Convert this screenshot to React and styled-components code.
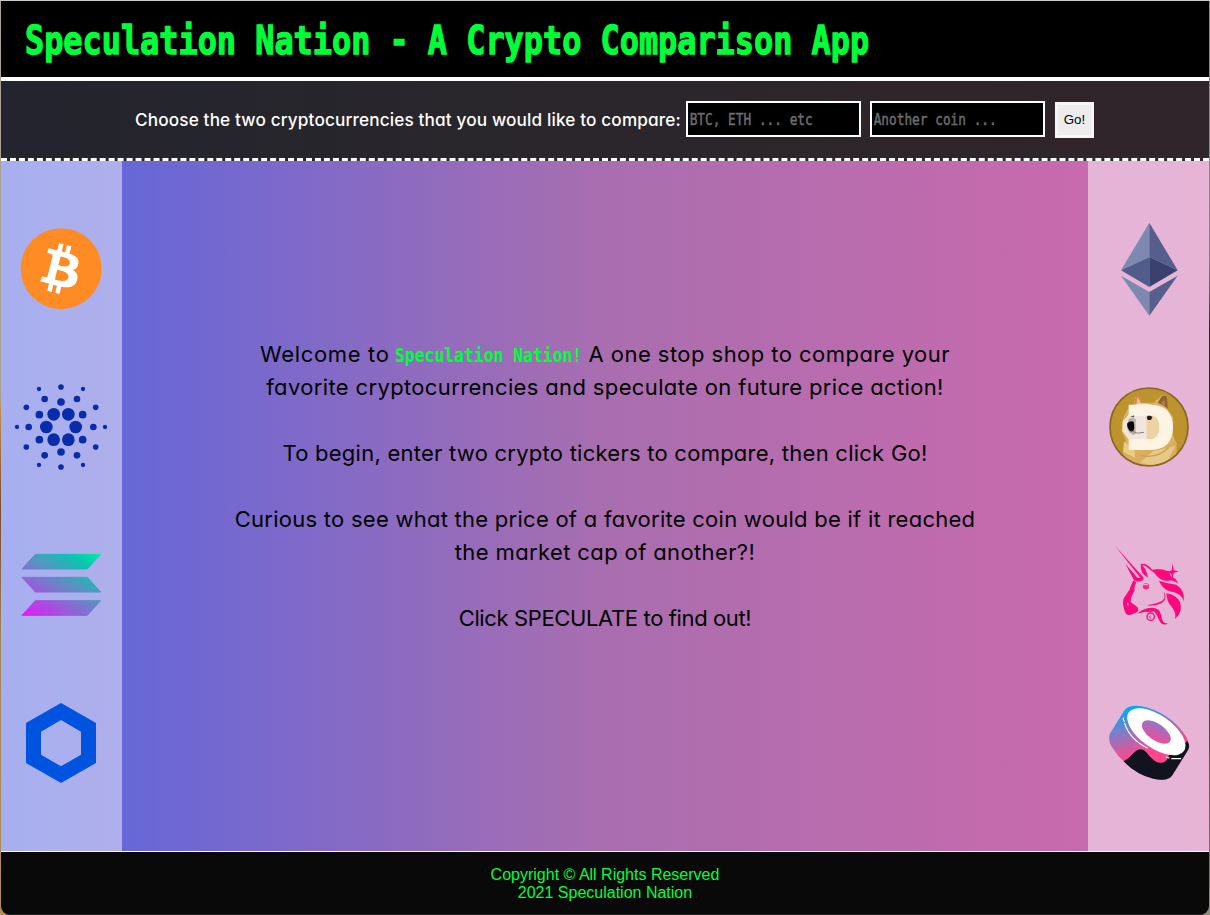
import React from "react";
import styled, { createGlobalStyle } from "styled-components";

const GlobalStyle = createGlobalStyle`
  * { box-sizing: border-box; }
  body { margin: 0; overflow: hidden; }
`;

const neon = "#00ff38";
const terminal = `"DejaVu Sans Mono", "Liberation Mono", monospace`;
const rounded = `Inter, "Open Sans", sans-serif`;

const Desktop = styled.div`
  height: 915px;
  padding: 1px 1px 0;
  background:
    linear-gradient(#c9cac8, #c9cac8) top / 100% 1px no-repeat,
    linear-gradient(#a9a294 0 43%, #c08a48 45%, #7b4a2c 56%, #a0865c 70%, #b58d55) left / 20px 100% no-repeat,
    linear-gradient(#8a8a8c 0 20%, #6f8583 29%, #2b2b2a 36% 70%, #8b8a80) right / 20px 100% no-repeat,
    #777;
`;

const Window = styled.div`
  display: flex;
  flex-direction: column;
  height: 914px;
  overflow: hidden;
  border-radius: 0 0 9px 9px;
  background: linear-gradient(to right, #5666e2 0%, #6667d8 10%, #a96eaf 50%, #c96aad 90%, #cf69ad 100%);
`;

const Header = styled.header`
  flex: 0 0 80px;
  display: flex;
  align-items: center;
  padding: 4px 0 0 24px;
  background: #000;
  border-bottom: 4px solid #fff;
`;

const Title = styled.h1`
  margin: 0;
  white-space: nowrap;
  color: ${neon};
  font: bold 38.4px/46px ${terminal};
  -webkit-text-stroke: 1.3px ${neon};
  transform: scaleX(0.83);
  transform-origin: left center;
`;

const SearchBar = styled.form`
  flex: 0 0 80px;
  display: flex;
  align-items: center;
  padding-left: 134px;
  background: linear-gradient(to right, #23242e, #2a262b 45%, #30252a);
  border-bottom: 3px dashed #fff;
`;

const Prompt = styled.label`
  width: 551px;
  white-space: nowrap;
  color: #fff;
  font: 500 17.2px/24px ${rounded};
  font-feature-settings: "cv11";
  letter-spacing: 0.14px;
`;

const Field = styled.div`
  width: 175px;
  height: 36px;
  margin-right: ${(p) => p.$gap}px;
  margin-bottom: 2px;
  overflow: hidden;
  background: #000;
  border: 2px solid #fff;
`;

const TickerInput = styled.input`
  display: block;
  width: 125%;
  height: 32px;
  padding: 3px 2px 0;
  border: 0;
  outline: 0;
  background: transparent;
  color: ${neon};
  font: 15.4px ${terminal};
  transform: scaleX(0.83);
  transform-origin: left center;
  &::placeholder {
    color: #6c6c6c;
    opacity: 1;
    -webkit-text-stroke: 0.5px #6c6c6c;
  }
`;

const GoButton = styled.button`
  width: 39px;
  height: 36px;
  padding: 0;
  border: 3px solid #f5f5f5;
  background: #ececec;
  color: #000;
  font: 13.3px "Liberation Sans", Arial, sans-serif;
`;

const Main = styled.main`
  flex: 0 0 691px;
  display: flex;
  border-bottom: 1px solid #fff;
`;

const CoinColumn = styled.aside`
  flex: 0 0 121px;
  display: flex;
  flex-direction: column;
  padding: 29px 0;
  background: rgba(255, 255, 255, ${(p) => p.$veil || 0.48});
`;

const CoinSvg = styled.svg`
  display: block;
  width: 121px;
  height: 158px;
`;

const Welcome = styled.section`
  flex: 1;
  display: flex;
  flex-direction: column;
  align-items: center;
  padding-top: 177px;
  color: #000;
  font: 22px/33px ${rounded};
  font-feature-settings: "cv11";
`;

const Paragraph = styled.div`
  display: flex;
  flex-direction: column;
  align-items: center;
  margin-bottom: 33px;
`;

const Line = styled.div`
  display: flex;
  white-space: pre;
  letter-spacing: ${(p) => p.$tracking || 0}px;
`;

const Phrase = styled.span`
  letter-spacing: ${(p) => p.$tracking}px;
`;

const Brand = styled.strong`
  width: 188px;
  margin: 0 6px 0 5px;
  color: ${neon};
  font: bold 19.2px/33px ${terminal};
  letter-spacing: 0;
  transform: translateY(1px) scaleX(0.853);
  transform-origin: left center;
`;

const Footer = styled.footer`
  flex: 1;
  padding-top: 14px;
  text-align: center;
  background: #090909;
  border-bottom: 1px solid #242424;
  color: ${neon};
  font: 16px/18px "Liberation Sans", Arial, sans-serif;
`;

const Bitcoin = () => (
  <CoinSvg viewBox="3 -60 363 474">
    <circle cx="183.5" cy="176" r="121.5" fill="#ff8b24" />
    <path
      transform="translate(58.5 54) scale(7.62)"
      fill="#fff"
      d="M23.189 14.02c.314-2.096-1.283-3.223-3.465-3.975l.708-2.84-1.728-.43-.69 2.765c-.454-.114-.92-.22-1.385-.326l.695-2.783L15.596 6l-.708 2.839c-.376-.086-.746-.17-1.104-.26l.002-.009-2.384-.595-.46 1.846s1.283.294 1.256.312c.7.175.826.638.805 1.006l-.806 3.235c.048.012.11.03.18.057l-.183-.045-1.13 4.532c-.086.212-.303.531-.793.41.018.025-1.256-.313-1.256-.313l-.858 1.978 2.25.561c.418.105.828.215 1.231.318l-.715 2.872 1.727.43.708-2.84c.472.127.93.245 1.378.357l-.706 2.828 1.728.43.715-2.866c2.948.558 5.164.333 6.097-2.333.752-2.146-.037-3.385-1.588-4.192 1.13-.26 1.98-1.003 2.207-2.538zm-3.95 5.538c-.533 2.147-4.148.986-5.32.695l.95-3.805c1.172.293 4.929.872 4.37 3.11zm.535-5.569c-.487 1.953-3.495.96-4.47.717l.86-3.45c.975.243 4.118.696 3.61 2.733z"
    />
  </CoinSvg>
);

const cardanoDots = [
  [161, 133, 19], [205, 133, 19], [139, 171, 19], [227, 171, 19], [161, 209, 19], [205, 209, 19],
  [183, 96, 11.5], [118, 134, 11.5], [248, 134, 11.5], [118, 209, 11.5], [248, 209, 11.5], [183, 246, 11.5],
  [134, 87, 10], [231, 87, 10], [86, 171, 10], [280, 171, 10], [134, 256, 10], [231, 256, 10],
  [183, 51, 8.5], [79, 112, 8.5], [287, 112, 8.5], [79, 231, 8.5], [287, 231, 8.5], [183, 291, 8.5],
  [117, 57, 6.5], [249, 57, 6.5], [51, 171, 6.5], [315, 171, 6.5], [117, 285, 6.5], [249, 285, 6.5],
];

const Cardano = () => (
  <CoinSvg viewBox="3 -66 363 474">
    {cardanoDots.map(([x, y, r]) => (
      <circle key={`${x}-${y}`} cx={x} cy={y} r={r} fill="#082caa" />
    ))}
  </CoinSvg>
);

const Solana = () => (
  <CoinSvg viewBox="3 -72 363 474">
    <defs>
      <linearGradient id="sol" gradientUnits="userSpaceOnUse" x1="270" y1="50" x2="120" y2="280">
        <stop offset="0" stopColor="#00eca6" />
        <stop offset=".2" stopColor="#0bc3b0" />
        <stop offset=".5" stopColor="#638bc5" />
        <stop offset="1" stopColor="#dd20f4" />
      </linearGradient>
    </defs>
    <g fill="url(#sol)" stroke="url(#sol)" strokeWidth="3" strokeLinejoin="round">
      <path d="M106 73H302L262 117H66Z" />
      <path d="M66 142H262L302 186H106Z" />
      <path d="M106 212H302L262 256H66Z" />
    </g>
  </CoinSvg>
);

const Chainlink = () => (
  <CoinSvg viewBox="3 402 363 474">
    <path
      fillRule="evenodd"
      fill="#0053df"
      d="M183 519L288 579V699L183 759L78 699V579ZM183 570L123 605V674L183 709L243 674V605Z"
    />
  </CoinSvg>
);

const Ethereum = () => (
  <CoinSvg viewBox="9 -60 363 474">
    <path d="M193 38L108 181L193 141Z" fill="#7d89ae" />
    <path d="M193 38L278 181L193 141Z" fill="#565f8b" />
    <path d="M193 141L108 181L193 231Z" fill="#525c8b" />
    <path d="M193 141L278 181L193 231Z" fill="#3a416e" />
    <path d="M108 197L193 246V317Z" fill="#7d89ae" />
    <path d="M278 197L193 246V317Z" fill="#565f8b" />
  </CoinSvg>
);

const Dogecoin = () => (
  <CoinSvg viewBox="9 -66 363 474">
    <defs>
      <clipPath id="coin"><circle cx="192" cy="171" r="114" /></clipPath>
    </defs>
    <circle cx="192" cy="171" r="117" fill="#bd932e" stroke="#886624" strokeWidth="5" />
    <g clipPath="url(#coin)">
      <path d="M117 300L115 235L122 210L110 183L114 145L128 117L147 100L154 72Q169 78 175 99L206 98L228 78Q244 70 247 85L249 121L264 142L265 200L275 220V300Z" fill="#dcb066" />
      <path d="M154 72Q170 78 176 101L148 102Z" fill="#c98d43" />
      <path d="M157 82Q165 88 168 102L154 103Z" fill="#efbd82" />
      <path d="M218 98L231 78Q246 72 247 87L249 117L237 107Z" fill="#8f6433" />
      <path d="M229 100Q236 88 239 92L239 108Z" fill="#b98048" />
      <path d="M148 106Q170 94 204 106L185 142L178 195Q166 211 130 207L112 184L113 154L130 135Z" fill="#f3e5cf" />
      <path d="M116 213Q134 234 181 241Q239 241 269 211L276 300H112Z" fill="#d9ae60" />
      <path d="M118 216L148 239L150 264L115 245Z" fill="#edcb87" />
      <path d="M205 243L270 228L248 273L206 286L164 278Z" fill="#e7c887" />
      <path d="M167 256Q216 268 252 232" fill="none" stroke="#d2a14f" strokeWidth="4" />
    </g>
    <path
      fillRule="evenodd"
      fill="#fdf4e3"
      d="M131 104H195Q264 104 264 171Q264 240 194 240H131V207H147V137H131ZM184 137V207Q222 211 222 171Q222 134 184 137Z"
    />
    <path d="M183 137Q222 134 222 171Q222 211 184 207Z" fill="#edd3a3" />
    <path d="M148 138H185V206H148Z" fill="#f0e6dc" />
    <path d="M131 147Q144 139 152 148V183Q154 193 146 195Q128 190 125 169Z" fill="#b6b1ad" />
    <path d="M126 161Q136 150 146 156Q151 178 143 185Q128 184 126 161Z" fill="#080808" />
    <path d="M139 183Q157 194 177 187" fill="none" stroke="#8d827b" strokeWidth="3" />
    <path d="M185 141Q192 134 202 141L198 150H188Z" fill="#241b13" />
    <path d="M136 141L147 136L148 142Z" fill="#42566a" />
  </CoinSvg>
);

const Uniswap = () => (
  <CoinSvg viewBox="9 -72 363 474">
    <g fill="#ff087d">
      <path d="M90 47L176 143Q177 153 158 155L147 151L121 101L158 144L166 143Z" />
      <path d="M145 151L154 157Q148 166 148 183Q137 201 137 216L154 229Q164 237 157 246L143 252Q132 258 123 252Q111 229 115 207L121 198Q135 180 140 162Z" />
      <path d="M167 102Q186 98 201 119Q209 117 239 119Q225 122 217 135L196 120Q181 104 172 106Q174 119 190 143Q166 132 167 102Z" />
      <path d="M168 106Q182 110 189 142Q167 134 168 106Z" />
      <path d="M204 121Q229 115 251 124L258 139L272 147L281 163Q267 147 246 153Q221 150 208 128Z" />
      <path d="M222 152Q250 162 274 164Q301 181 296 214Q289 189 254 184Q230 175 222 152Z" />
      <path d="M244 190Q273 194 285 216Q295 247 270 267Q275 248 258 228Q246 217 244 190Z" />
      <path d="M158 251Q173 234 199 233Q227 233 229 258Q231 282 250 280Q232 291 222 270Q217 255 207 244Q189 248 184 245Q171 247 158 251Z" />
      <path d="M263 100L266 121L281 124L266 129L262 146L258 130L244 125L260 121Z" />
    </g>
    <path d="M237 187Q244 205 230 214Q214 222 188 226Q213 228 230 219Q248 207 237 187Z" fill="#ff087d" stroke="#ff087d" />
    <circle cx="183" cy="169" r="9.5" fill="#f12c8c" />
    <path d="M175 166Q182 160 189 166" fill="none" stroke="#f2a0ca" strokeWidth="4" />
    <path d="M126 220Q130 219 128 227" fill="none" stroke="#e8b1d6" strokeWidth="4" />
    <circle cx="197" cy="260" r="11" fill="#e8b1d6" stroke="#ff087d" strokeWidth="4" />
    <path d="M196 257Q190 264 199 264" fill="none" stroke="#ff087d" strokeWidth="3" />
  </CoinSvg>
);

const Sushi = () => (
  <CoinSvg viewBox="9 -78 363 474">
    <defs>
      <linearGradient id="roll" gradientUnits="userSpaceOnUse" x1="125" y1="55" x2="165" y2="195">
        <stop offset="0" stopColor="#02aaf2" />
        <stop offset=".45" stopColor="#7f7ec7" />
        <stop offset="1" stopColor="#ff478e" />
      </linearGradient>
      <linearGradient id="filling" x1=".15" y1="0" x2=".7" y2="1">
        <stop offset="0" stopColor="#867cc9" />
        <stop offset="1" stopColor="#f44a99" />
      </linearGradient>
    </defs>
    <path d="M119 60Q138 39 189 53Q266 78 306 144Q317 172 302 191L260 258Q246 276 205 266Q128 245 81 172Q68 153 74 132Z" fill="url(#roll)" />
    <path d="M116 214Q132 206 145 190Q167 167 184 187Q211 223 231 218Q247 216 252 195Q279 198 306 152Q319 169 306 185L262 256Q249 276 205 266Q155 255 116 214Z" fill="#11131f" />
    <ellipse cx="214" cy="125" rx="101" ry="49" transform="rotate(35 214 125)" fill="#fff" />
    <ellipse cx="214" cy="126" rx="50" ry="25" transform="rotate(35 214 126)" fill="url(#filling)" />
    <path d="M115 84Q114 91 118 94M119 100Q134 147 187 174M260 206H287M243 201L252 204" fill="none" stroke="#fff" strokeWidth="3.5" strokeLinecap="round" />
  </CoinSvg>
);

export default function App() {
  return (
    <Desktop>
      <GlobalStyle />
      <Window>
        <Header>
          <Title>Speculation Nation - A Crypto Comparison App</Title>
        </Header>
        <SearchBar onSubmit={(e) => e.preventDefault()}>
          <Prompt htmlFor="first">Choose the two cryptocurrencies that you would like to compare:</Prompt>
          <Field $gap={9}><TickerInput id="first" placeholder="BTC, ETH ... etc" /></Field>
          <Field $gap={10}><TickerInput placeholder="Another coin ..." /></Field>
          <GoButton>Go!</GoButton>
        </SearchBar>
        <Main>
          <CoinColumn>
            <Bitcoin />
            <Cardano />
            <Solana />
            <Chainlink />
          </CoinColumn>
          <Welcome>
            <Paragraph>
              <Line>
                <Phrase $tracking={0.65}>Welcome to</Phrase>
                <Brand>Speculation Nation!</Brand>
                <Phrase $tracking={0.46}>A one stop shop to compare your</Phrase>
              </Line>
              <Line $tracking={0.36}>favorite cryptocurrencies and speculate on future price action!</Line>
            </Paragraph>
            <Paragraph>
              <Line $tracking={0.25}>To begin, enter two crypto tickers to compare, then click Go!</Line>
            </Paragraph>
            <Paragraph>
              <Line $tracking={0.26}>Curious to see what the price of a favorite coin would be if it reached</Line>
              <Line $tracking={0.38}>the market cap of another?!</Line>
            </Paragraph>
            <Paragraph>
              <Line $tracking={-0.37}>Click SPECULATE to find out!</Line>
            </Paragraph>
          </Welcome>
          <CoinColumn $veil={0.5}>
            <Ethereum />
            <Dogecoin />
            <Uniswap />
            <Sushi />
          </CoinColumn>
        </Main>
        <Footer>
          Copyright © All Rights Reserved
          <br />
          2021 Speculation Nation
        </Footer>
      </Window>
    </Desktop>
  );
}
